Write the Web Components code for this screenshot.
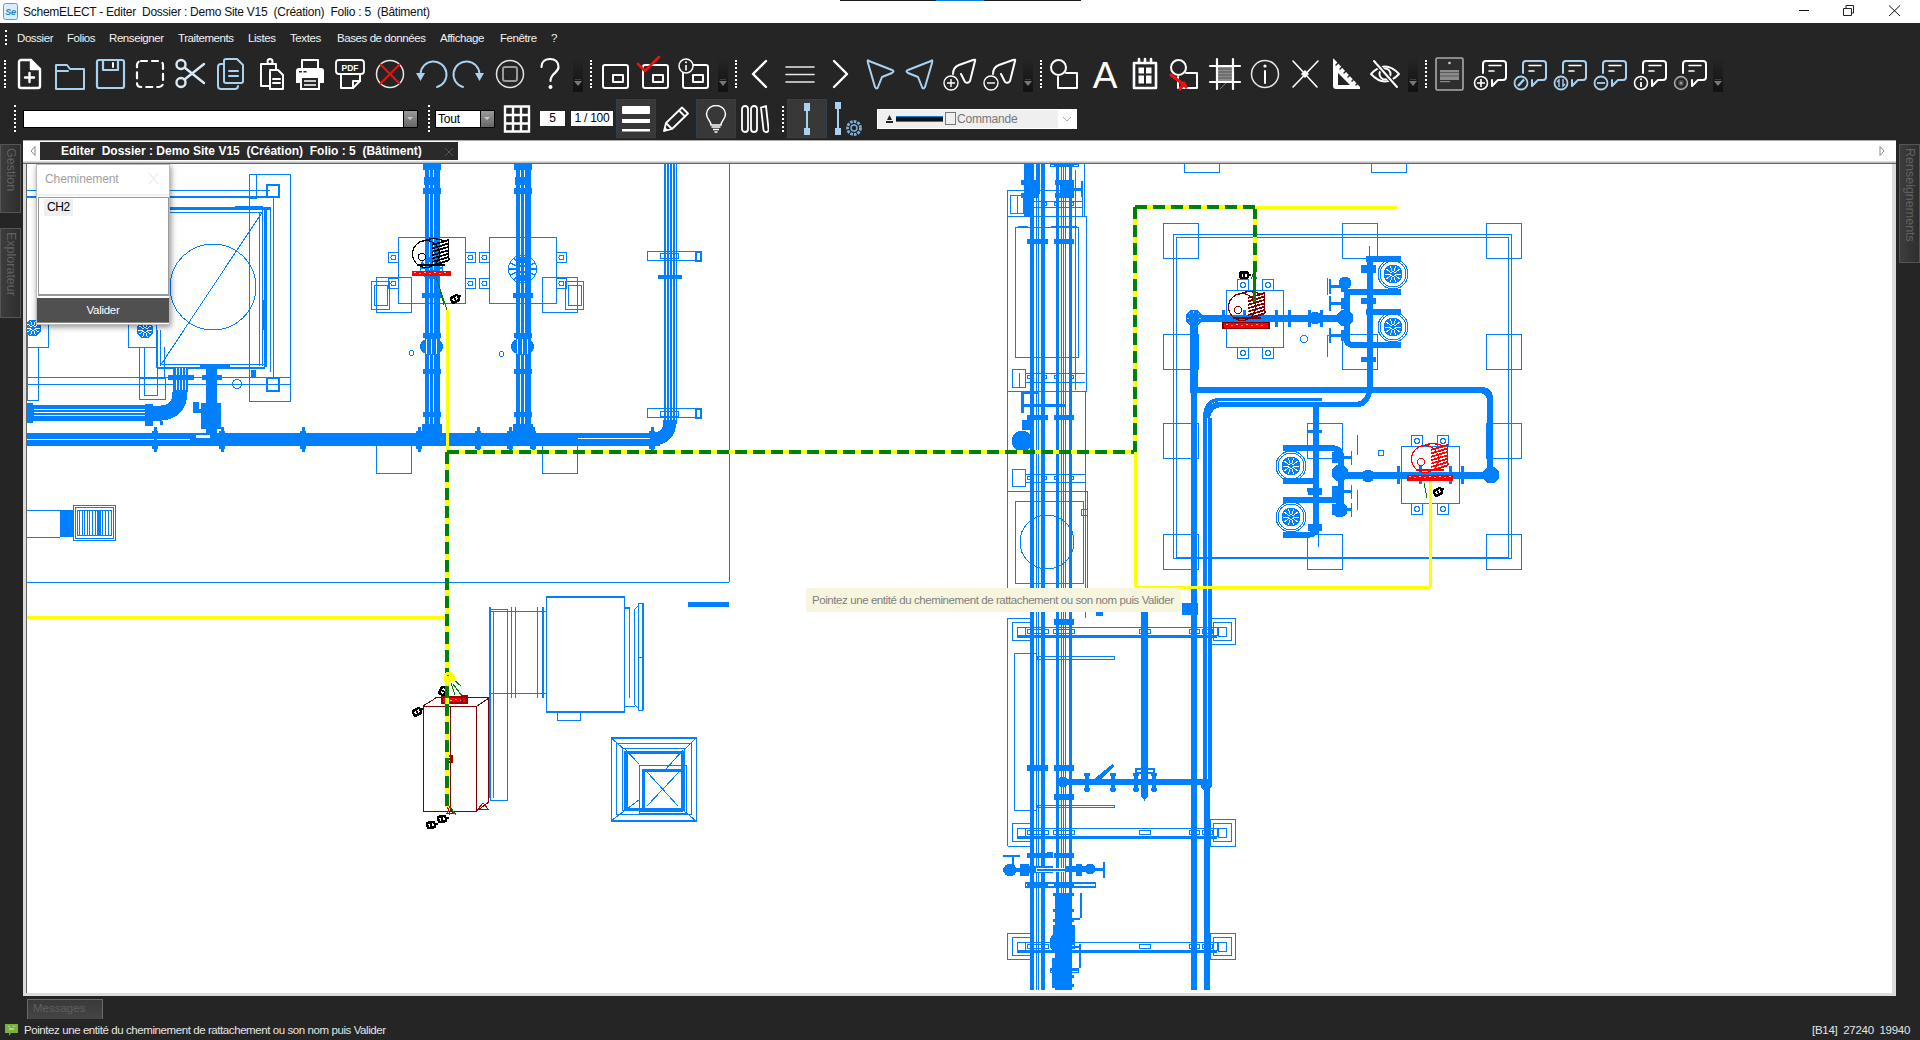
<!DOCTYPE html>
<html lang="fr"><head><meta charset="utf-8"><title>SchemELECT</title>
<style>html,body{margin:0;height:100%;background:#252525;overflow:hidden}</style></head>
<body>
<sc-app>
  <sc-titlebar>SchemELECT - Editer&nbsp; Dossier : Demo Site V15&nbsp; (Création)&nbsp; Folio : 5&nbsp; (Bâtiment)</sc-titlebar>
  <sc-menubar>
    <sc-menu w="50">Dossier</sc-menu><sc-menu w="42">Folios</sc-menu><sc-menu w="69">Renseigner</sc-menu><sc-menu w="70">Traitements</sc-menu><sc-menu w="42">Listes</sc-menu><sc-menu w="47">Textes</sc-menu><sc-menu w="103">Bases de données</sc-menu><sc-menu w="60">Affichage</sc-menu><sc-menu w="51">Fenêtre</sc-menu><sc-menu w="10">?</sc-menu>
  </sc-menubar>
  <sc-toolbar>
    <sc-group first more>
      <sc-btn icon="new"></sc-btn><sc-btn icon="folder"></sc-btn><sc-btn icon="save"></sc-btn><sc-btn icon="select"></sc-btn><sc-btn icon="cut"></sc-btn><sc-btn icon="copy"></sc-btn><sc-btn icon="paste"></sc-btn><sc-btn icon="print"></sc-btn><sc-btn icon="pdf"></sc-btn><sc-btn icon="cancel"></sc-btn><sc-btn icon="undo"></sc-btn><sc-btn icon="redo"></sc-btn><sc-btn icon="stop"></sc-btn><sc-btn icon="help"></sc-btn>
    </sc-group>
    <sc-group more><sc-btn icon="win"></sc-btn><sc-btn icon="wincheck"></sc-btn><sc-btn icon="wininfo"></sc-btn></sc-group>
    <sc-group more>
      <sc-btn icon="prev"></sc-btn><sc-btn icon="lines"></sc-btn><sc-btn icon="next"></sc-btn><sc-btn icon="arrowl"></sc-btn><sc-btn icon="arrowr"></sc-btn><sc-btn icon="arrowplus"></sc-btn><sc-btn icon="arrowminus"></sc-btn>
    </sc-group>
    <sc-group more>
      <sc-btn icon="shapes"></sc-btn><sc-btn icon="letter"></sc-btn><sc-btn icon="cal"></sc-btn><sc-btn icon="shapesfix"></sc-btn><sc-btn icon="hash"></sc-btn><sc-btn icon="info"></sc-btn><sc-btn icon="cross"></sc-btn><sc-btn icon="square"></sc-btn><sc-btn icon="eye"></sc-btn>
    </sc-group>
    <sc-group more>
      <sc-btn icon="note"></sc-btn><sc-btn icon="cplus"></sc-btn><sc-btn icon="cpen"></sc-btn><sc-btn icon="cswap"></sc-btn><sc-btn icon="cminus"></sc-btn><sc-btn icon="cinfo"></sc-btn><sc-btn icon="ctarget"></sc-btn>
    </sc-group>
  </sc-toolbar>
  <sc-toolbar2></sc-toolbar2>
  <sc-workspace>
    <sc-dock slot="left"><sc-vtab h="69">Gestion</sc-vtab><sc-vtab h="90" gap="15">Explorateur</sc-vtab></sc-dock>
    <sc-doc title-text="Editer&nbsp; Dossier : Demo Site V15&nbsp; (Création)&nbsp; Folio : 5&nbsp; (Bâtiment)">
      <sc-canvas>
        <sc-popup></sc-popup>
        <sc-tip>Pointez une entité du cheminement de rattachement ou son nom puis Valider</sc-tip>
      </sc-canvas>
    </sc-doc>
    <sc-dock slot="right" right><sc-vtab h="119">Renseignements</sc-vtab></sc-dock>
  </sc-workspace>
  <sc-messages>Messages</sc-messages>
  <sc-status coords="[B14]&nbsp; 27240&nbsp; 19940">Pointez une entité du cheminement de rattachement ou son nom puis Valider</sc-status>
</sc-app>
<script>
const FONT='"Liberation Sans",Arial,sans-serif';
const TXT=`font:11.5px ${FONT};letter-spacing:-.42px`;
function def(name,html){
  customElements.define(name,class extends HTMLElement{
    constructor(){super();this.attachShadow({mode:'open'});if(typeof html!=='function')this.shadowRoot.innerHTML=html;}
    connectedCallback(){if(typeof html==='function')this.shadowRoot.innerHTML=html(this);}
  });
}
const BL='#a9d1f0';
const g=(c,w,inner,ex='')=>`<g fill="none" stroke="${c}" stroke-width="${w}" stroke-linecap="round" stroke-linejoin="round" ${ex}>${inner}</g>`;
const winBox=`<rect x="6" y="9" width="25" height="23" rx="2"/><rect x="16" y="19" width="10" height="7"/>`;
const shapes=`<circle cx="11.5" cy="11.5" r="7.5"/><path d="M19 17H30V32H11V21"/>`;
const bubble=c=>g(c,2,`<path d="M14 5H31a3 3 0 0 1 3 3V21a3 3 0 0 1-3 3H26L20 30V24"/><path d="M14 5a3 3 0 0 0-3 3V17"/>`)+g('#fff',1.6,`<path d="M17 9.5H29M17 15H22"/>`);
const ICONS={
 new:g('#fff',2.4,`<path d="M9 4H19L28 13V30a2 2 0 0 1-2 2H9a2 2 0 0 1-2-2V6a2 2 0 0 1 2-2Z"/><path d="M19 4V13H28" fill="#fff"/><path d="M17.5 17V26M13 21.5H22"/>`),
 folder:g(BL,2,`<path d="M4 33V9H15L18 13H32V33Z"/><path d="M4 15H16"/>`),
 save:g(BL,2.2,`<path d="M7 4H30a2 2 0 0 1 2 2V30a2 2 0 0 1-2 2H7a2 2 0 0 1-2-2V6a2 2 0 0 1 2-2Z"/><path d="M11 4V14H26V4"/>`)+g('#fff',2,`<path d="M21 7V11"/>`),
 select:g('#fff',2.2,`<rect x="5" y="5" width="26" height="26" rx="4" stroke-dasharray="6 5"/>`),
 cut:g('#d8e9f8',2.4,`<circle cx="9" cy="8.5" r="4.5"/><circle cx="9" cy="26.5" r="4.5"/><path d="M12.5 11.5L32 27M12.5 23.5L32 8"/>`),
 copy:g(BL,2,`<path d="M14 3H25L31 9V25a2 2 0 0 1-2 2H14a2 2 0 0 1-2-2V5a2 2 0 0 1 2-2Z"/><path d="M12 8H9a3 3 0 0 0-3 3V30a3 3 0 0 0 3 3H23a3 3 0 0 0 3-3"/><path d="M17 15H26M17 20H26"/>`),
 paste:g('#fff',2,`<path d="M13 8H9V30H17"/><path d="M13 8H24V13"/><circle cx="18" cy="5.5" r="2.5"/><path d="M18 14H26L31 19V33H18Z"/><path d="M21 23H28M21 27H28"/>`),
 print:g('#fff',2,`<path d="M10 12V4H26V12"/>`)+`<path d="M7 12H29a3 3 0 0 1 3 3V27H4V15a3 3 0 0 1 3-3Z" fill="#fff"/><rect x="9" y="21" width="18" height="12" fill="#252525" stroke="#fff" stroke-width="2"/><path d="M12 25H24M12 29H24" stroke="#fff" stroke-width="1.6"/><rect x="7" y="15" width="3" height="1.5" fill="#252525"/><rect x="11.5" y="15" width="3" height="1.5" fill="#252525"/>`,
 pdf:g('#fff',2,`<path d="M9 17V32H21L28 25V17"/><path d="M21 32V25H28"/>`)+`<rect x="4" y="4" width="28" height="14" rx="3" fill="#252525" stroke="#fff" stroke-width="1.8"/><text x="18" y="14.5" font-family="${FONT}" font-size="8.5" font-weight="700" fill="#fff" text-anchor="middle">PDF</text>`,
 cancel:g('#e8e8e8',1.5,`<circle cx="18" cy="18" r="13.5"/>`)+g('#ee1111',2,`<path d="M8.5 8.5L27.5 27.5M27.5 8.5L8.5 27.5"/>`),
 undo:g(BL,2,`<path d="M25 31A13 13 0 1 0 8.5 18"/>`)+`<path d="M4 17H13L8.5 25Z" fill="${BL}"/>`,
 redo:`<g transform="translate(36,0) scale(-1,1)">`+g(BL,2,`<path d="M25 31A13 13 0 1 0 8.5 18"/>`)+`<path d="M4 17H13L8.5 25Z" fill="${BL}"/></g>`,
 stop:g('#e4e4e4',1.5,`<circle cx="18" cy="18" r="13.5"/>`)+g('#9a9a9a',2,`<rect x="11" y="11" width="14" height="14" rx="2"/>`),
 help:g('#fff',2.2,`<path d="M9.5 11C9.5 6 13 3 18 3S26.5 6 26.5 11C26.5 17 18.5 17 18.5 25"/>`)+`<circle cx="18.5" cy="31" r="2" fill="#fff"/>`,
 win:g('#fff',2,winBox),
 wincheck:g('#fff',2,winBox)+g('#ee1111',2.6,`<path d="M1 8L8 15L22 1"/>`),
 wininfo:g('#fff',2,winBox)+`<circle cx="9" cy="10" r="7" fill="#252525" stroke="#fff" stroke-width="1.5"/><path d="M9 9V14.5" stroke="#fff" stroke-width="1.6"/><circle cx="9" cy="6.3" r="1" fill="#fff"/>`,
 prev:g('#fff',2.4,`<path d="M24 5L11 18L24 31"/>`),
 next:g('#fff',2.4,`<path d="M12 5L25 18L12 31"/>`),
 lines:g('#e8e8e8',1.6,`<path d="M4 11H32M4 18.5H32M4 26H32"/>`),
 arrowl:g(BL,2,`<path d="M7 5Q5 3 6 7L13 31Q15 34 16 31L20 21L30 17Q33 15 30 14Z"/>`),
 arrowr:g(BL,2,`<path d="M29 5Q31 3 30 7L23 31Q21 34 20 31L16 21L6 17Q3 15 6 14Z"/>`),
 arrowplus:g('#fff',2,`<path d="M33 5Q34 3 31 4L17 9C12 11 11 14 11 18M33 5L28 25Q26 28 23 26L19 18"/>`)+`<circle cx="9" cy="27" r="7" fill="#252525" stroke="#fff" stroke-width="1.4"/><path d="M5 27H13M9 23V31" stroke="#fff" stroke-width="1.4"/>`,
 arrowminus:g('#fff',2,`<path d="M33 5Q34 3 31 4L17 9C12 11 11 14 11 18M33 5L28 25Q26 28 23 26L19 18"/>`)+`<circle cx="9" cy="27" r="7" fill="#252525" stroke="#fff" stroke-width="1.4"/><path d="M5 27H13" stroke="#fff" stroke-width="1.4"/>`,
 shapes:g('#fff',2,shapes),
 letter:`<text x="18" y="32" font-family="${FONT}" font-size="37" fill="#fff" text-anchor="middle">A</text>`,
 cal:g('#fff',2.6,`<rect x="7" y="7" width="22" height="25"/><path d="M12 3V7M18 3V7M24 3V7"/>`,'stroke-linecap="butt"')+`<rect x="11.5" y="11.5" width="5.5" height="6" fill="#fff"/><rect x="19" y="11.5" width="5.5" height="6" fill="#fff"/><rect x="11.5" y="19.5" width="5.5" height="8" fill="#fff"/><rect x="19" y="19.5" width="5.5" height="8" fill="#fff"/>`,
 shapesfix:g('#fff',2,shapes)+g('#ee1111',3.2,`<path d="M4 19L16 28M13 33L17 27L19 31"/>`),
 hash:`<rect x="10" y="10" width="16" height="16" fill="#8a8a8a"/><path d="M10 13H26M10 16H26M10 19H26M10 22H26" stroke="#555" stroke-width="1"/><path d="M19 27L13 33" stroke="#777"/>`+g('#fff',2.2,`<path d="M10 3V33M26 3V33M3 10H33M3 26H33"/>`,'stroke-linecap="butt"'),
 info:g('#e8e8e8',1.5,`<circle cx="18" cy="18" r="13.5"/>`)+g('#fff',2,`<path d="M18 15V27"/>`)+`<circle cx="18" cy="10" r="1.6" fill="#fff"/>`,
 cross:g('#fff',1.6,`<path d="M6 5L30 31M31 5L6 31"/>`)+`<path d="M18 14L22 18L18 22L14 18Z" fill="#fff"/>`,
 square:`<path d="M6 3Q6 2 7 3L33 31V33H9Q6 33 6 30Z" fill="#fff"/><path d="M11 17L23 29H11Z" fill="#252525"/>`+g('#252525',1.5,`<path d="M11 7L9 9M15 11L13 13M19 15L17 17M23 19L21 21M27 23L25 25M31 27L29 29"/>`),
 eye:g('#fff',2,`<path d="M4 18Q18 3 32 18Q18 33 4 18Z"/><circle cx="18" cy="18" r="5.5"/>`)+g('#252525',4.5,`<path d="M7 5L30 31"/>`)+g('#fff',2,`<path d="M7 5L30 31"/>`),
 note:`<rect x="4" y="4" width="27" height="32" rx="1.5" transform="translate(0,-2)" fill="#2e2e2e" stroke="#aaa" stroke-width="1.6"/>`+`<circle cx="17.5" cy="7" r="1.3" fill="#ccc"/><rect x="8" y="14" width="19" height="10" fill="#8c8c8c"/><path d="M8 16.5H27M8 20H27" stroke="#5a5a5a" stroke-width="1"/><rect x="8" y="25" width="10" height="1.2" fill="#8c8c8c"/>`,
 cplus:bubble('#fff')+`<circle cx="9" cy="27" r="6.5" fill="#252525" stroke="#fff" stroke-width="1.6"/><path d="M5 27H13M9 23V31" stroke="#fff" stroke-width="1.6"/>`,
 cpen:bubble(BL)+`<circle cx="9" cy="27" r="6.5" fill="#252525" stroke="${BL}" stroke-width="1.8"/><path d="M6 30L12 23.5" stroke="${BL}" stroke-width="2.4"/>`,
 cswap:bubble(BL)+`<circle cx="9" cy="27" r="6.5" fill="#252525" stroke="${BL}" stroke-width="1.8"/><path d="M7 31V24L5 26M11 23V30L13 28" stroke="${BL}" stroke-width="1.4" fill="none"/>`,
 cminus:bubble(BL)+`<circle cx="9" cy="27" r="6.5" fill="#252525" stroke="${BL}" stroke-width="1.8"/><path d="M5 27H13" stroke="${BL}" stroke-width="1.8"/>`,
 cinfo:bubble('#fff')+`<circle cx="9" cy="27" r="6.5" fill="#252525" stroke="#fff" stroke-width="1.6"/><path d="M9 26V31" stroke="#fff" stroke-width="1.8"/><circle cx="9" cy="23.3" r="1" fill="#fff"/>`,
 ctarget:bubble('#fff')+`<circle cx="9" cy="27" r="6.5" fill="#444" stroke="#aaa" stroke-width="1.4"/><circle cx="9" cy="27" r="4" fill="none" stroke="#111" stroke-width="1.2"/><circle cx="9" cy="27" r="1.5" fill="#999"/>`
};
def('sc-app',`<style>:host{display:flex;flex-direction:column;height:1040px;width:1920px;background:#252525;color:#fff;font:12px ${FONT}}</style><slot></slot>`);
def('sc-titlebar',`<style>
:host{display:flex;align-items:center;height:23px;flex:none;background:#fff;color:#111;font:12px ${FONT};letter-spacing:-.26px;position:relative}
.logo{width:15px;height:17px;margin:0 5px 0 3px;flex:none}
.txt{flex:1;white-space:nowrap}
.ctl{display:flex;height:100%;width:143px;flex:none}
.ctl svg{width:45px;height:23px;display:block;flex:none}
.progress{position:absolute;left:840px;top:0;width:241px;height:1px;background:#1c1c1c}
.progress i{position:absolute;left:96px;width:48px;height:1px;background:#0a7fd8}
</style>
<svg class="logo" viewBox="0 0 15 17"><rect x=".5" y=".5" width="14" height="16" rx="2" fill="#d9efff" stroke="#4aa3df"/><text x="7.5" y="12" font-family="${FONT}" font-size="9" font-weight="700" font-style="italic" fill="#1a83c9" text-anchor="middle">Se</text></svg>
<span class="txt"><slot></slot></span>
<div class="progress"><i></i></div>
<div class="ctl">
<svg viewBox="0 0 45 23"><path d="M22 10.5H32" stroke="#111"/></svg>
<svg viewBox="0 0 45 23" style="margin-left:2px"><path d="M19.5 8.5H27.5V15.5H19.5ZM22 8.5V5.5H29.5V13H27.5" fill="none" stroke="#222"/></svg>
<svg viewBox="0 0 37 23" style="width:37px;margin-left:9px"><path d="M11 5.5L22 16M22 5.5L11 16" stroke="#111" fill="none"/></svg>
</div>`);
def('sc-menubar',`<style>
:host{display:flex;align-items:center;height:27px;flex:none;background:#252525;padding:2px 0 0 17px;position:relative;box-sizing:border-box}
i{position:absolute;left:5px;top:7px;width:0;height:15px;border-left:2px dotted #fff}
</style><i></i><slot></slot>`);
def('sc-menu',el=>`<style>:host{display:block;flex:none;width:${el.getAttribute('w')}px;color:#f2f2f2;${TXT};white-space:nowrap}</style><slot></slot>`);
def('sc-toolbar',`<style>:host{display:flex;height:47px;flex:none;align-items:center}</style><slot></slot>`);
def('sc-group',el=>`<style>:host{display:flex;align-items:center;height:47px;flex:none}
.grip{width:${el.hasAttribute('first')?10:9}px;height:28px;display:flex;justify-content:center}
.grip i{border-left:2px dotted #fff;height:28px;width:0;display:block}
.more{width:16px;height:34px;display:flex;justify-content:center;align-self:center;margin-top:3px}
.more b{display:block;width:10px;height:34px;background:linear-gradient(#252525,#111);position:relative}
.more svg{position:absolute;left:1px;bottom:6px}
</style><div class="grip"><i></i></div><slot></slot><div class="more"><b><svg width="8" height="7" viewBox="0 0 8 7"><path d="M1 0H7" stroke="#666"/><path d="M0 2H8L4 7Z" fill="#777"/></svg></b></div>`);
def('sc-btn',el=>`<style>:host{display:block;width:40px;height:36px;flex:none}svg{display:block;width:36px;height:36px;margin:0 2px;overflow:visible}</style><svg viewBox="0 0 36 36">${ICONS[el.getAttribute('icon')]||''}</svg>`);
def('sc-toolbar2',`<style>
:host{display:flex;height:43px;flex:none;align-items:center;position:relative;padding-left:14px;box-sizing:border-box}
.grip{border-left:2px dotted #fff;height:27px;width:0;flex:none}
.ddl{display:flex;height:16px;border:1px solid #000;background:#fff;flex:none;box-sizing:content-box}
.ddl b{width:13px;background:linear-gradient(#9a9a9a,#666);display:block;position:relative;border-left:1px solid #000}
.ddl b::after{content:"";position:absolute;left:3px;top:6px;border:3.5px solid transparent;border-top-color:#ccc}
.ddl span{color:#000;font:12px ${FONT};letter-spacing:-.2px;line-height:16px;padding-left:2px}
.box{background:#fff;color:#000;font:12px ${FONT};letter-spacing:-.25px;height:15px;line-height:15px;text-align:center;flex:none}
.hl{width:38px;height:37px;background:#383838;border:1px solid #2d4050;display:flex;align-items:center;justify-content:center;flex:none;box-sizing:content-box}
svg{display:block;flex:none}
.combo{width:200px;height:20px;background:#efefef;border:1.5px solid #fff;box-sizing:border-box;display:flex;align-items:center;flex:none;position:relative;font:12px ${FONT};letter-spacing:-.2px;color:#777}
.combo .ln{width:47px;height:4px;background:#111;border-top:1px solid #0a7fd8;border-bottom:1px solid #0a7fd8;margin-left:3px}
.combo .sq{width:11px;height:13px;border:1px solid #777;margin-left:2px;box-sizing:border-box}
.combo em{font-style:normal;margin-left:1px;flex:1}
.combo .ch{position:absolute;right:0;top:0;bottom:0;width:18px;background:#fff;display:flex;align-items:center;justify-content:center}
</style>
<div class="grip"></div>
<div class="ddl" style="margin-left:7px;width:393px"><span style="flex:1"></span><b></b></div>
<div class="grip" style="margin-left:10px"></div>
<div class="ddl" style="margin-left:5px;width:58px"><span style="flex:1">Tout</span><b></b></div>
<svg style="margin-left:8px" width="28" height="28" viewBox="0 0 28 28"><path d="M2 1.5H26V26.5H2ZM2 10H26M2 18.5H26M10 1.5V26.5M18 1.5V26.5" fill="none" stroke="#fff" stroke-width="2.4"/></svg>
<div class="box" style="margin-left:9px;width:25px">5</div>
<div class="box" style="margin-left:6px;width:42px">1 / 100</div>
<div class="hl" style="margin-left:3px"><svg width="28" height="26" viewBox="0 0 28 26"><rect width="28" height="8" y="0" rx="1" fill="#fff"/><rect width="28" height="4" y="13" fill="#fff"/><rect width="28" height="2.5" y="23" fill="#fff"/></svg></div>
<svg style="margin-left:6px" width="28" height="28" viewBox="0 0 28 28"><path d="M2 26L4 18L20 2.5L26 8.5L10 24Z M17 5.5L23 11.5 M4 18L10 24" fill="none" stroke="#fff" stroke-width="1.8" stroke-linejoin="round"/><path d="M2 26.5L3 22L6.5 25.5Z" fill="#fff"/></svg>
<div class="hl" style="margin-left:6px"><svg width="22" height="28" viewBox="0 0 22 28"><path d="M6 20C6 16 1.5 14 1.5 9A9.5 8.5 0 0 1 20.5 9C20.5 14 16 16 16 20Z" fill="none" stroke="#fff" stroke-width="1.5"/><path d="M6.5 22H15.5M8 24.5H14M9.5 27H12.5" stroke="#fff" stroke-width="1.4"/></svg></div>
<svg style="margin-left:5px" width="28" height="28" viewBox="0 0 28 28"><g fill="none" stroke="#fff" stroke-width="1.8"><rect x="1" y="1" width="6" height="26" rx="3"/><rect x="10" y="1" width="6" height="26" rx="3"/><path d="M20 2.5L25 1.2L27.6 25Q27 27.5 24.5 27Q23 26.6 22.5 25Z"/></g></svg>
<div class="grip" style="margin-left:13px;height:26px"></div>
<div class="hl" style="margin-left:3px"><svg width="8" height="32" viewBox="0 0 8 32"><rect width="6" height="8" x="1" y="0" fill="${BL}"/><rect width="2" height="18" x="3" y="7" fill="${BL}"/><rect width="6" height="7" x="1" y="25" fill="${BL}"/></svg></div>
<svg style="margin-left:8px" width="28" height="36" viewBox="0 0 28 36"><rect width="6" height="7" x="0" y="1" fill="${BL}"/><rect width="2" height="20" x="2" y="7" fill="${BL}"/><rect width="6" height="7" x="0" y="27" fill="${BL}"/><g fill="none" stroke="#7fb0d8" stroke-width="1.4"><circle cx="19" cy="27" r="3"/><circle cx="19" cy="27" r="6.5" stroke-dasharray="2.6 1.1" stroke-width="2.8"/></g></svg>
<div class="combo" style="margin-left:14px"><svg style="margin-left:8px" width="7" height="8" viewBox="0 0 7 8"><path d="M3.5 0L6 5H1Z" fill="#222"/><rect y="6" width="7" height="2" fill="#222"/></svg><span class="ln"></span><span class="sq"></span><em>Commande</em><span class="ch"><svg width="10" height="6" viewBox="0 0 10 6"><path d="M1 1L5 5L9 1" fill="none" stroke="#aaa"/></svg></span></div>`);
def('sc-workspace',`<style>:host{display:flex;height:856px;flex:none}</style><slot name="left"></slot><slot></slot><slot name="right"></slot>`);
def('sc-dock',el=>`<style>:host{display:flex;flex-direction:column;width:${el.hasAttribute('right')?24:23}px;flex:none;padding-top:4px;box-sizing:border-box;align-items:${el.hasAttribute('right')?'flex-end':'flex-start'}}</style><slot></slot>`);
def('sc-vtab',el=>`<style>:host{display:flex;flex:none;width:21px;height:${el.getAttribute('h')}px;margin-top:${el.getAttribute('gap')||0}px;box-sizing:border-box;background:linear-gradient(90deg,#3d3d3d,#2e2e2e);border:1px solid #555;justify-content:center;color:#616161;font:12.5px ${FONT}}
span{writing-mode:vertical-rl;padding-top:3px;white-space:nowrap}</style><span><slot></slot></span>`);
def('sc-doc',el=>`<style>
:host{display:flex;flex-direction:column;flex:1;min-width:0;background:#dcdcdc;position:relative}
.strip{height:21px;background:#fff;border-top:1px solid #aaa;box-sizing:border-box;display:flex;align-items:flex-end;position:relative;flex:none}
.tab{margin-left:17px;width:418px;height:18px;background:#2a2a2a;color:#fff;font:700 12px ${FONT};display:flex;align-items:center;padding-left:21px;box-sizing:border-box;white-space:nowrap;position:relative;margin-bottom:1px}
.tab svg{position:absolute;right:4px;top:5px}
.a{position:absolute;left:7px;top:5px}
.b{position:absolute;right:11px;top:5px}
.sep{height:3px;flex:none;background:linear-gradient(#fff 0,#bbb 1px,#bbb 2px,#666 2px);}
.body{flex:1;display:flex;min-height:0;padding:0 4px 3px 3px;}
</style>
<div class="strip"><svg class="a" width="6" height="10" viewBox="0 0 6 10"><path d="M5 .5L1 5L5 9.5Z" fill="#fff" stroke="#888"/></svg><div class="tab">${el.getAttribute('title-text')}<svg width="10" height="10" viewBox="0 0 10 10"><path d="M1 1L9 9M9 1L1 9" stroke="#555" fill="none"/></svg></div><svg class="b" width="6" height="10" viewBox="0 0 6 10"><path d="M1 .5L5 5L1 9.5Z" fill="#fff" stroke="#888"/></svg></div>
<div class="sep"></div>
<div class="body"><slot></slot></div>`);
/* ---- drawing ---- */
const B='#0080ff';
function drawing(){
  const s=[];
  const L=(a,b,c,d,w=1,col=B)=>s.push(`<line x1="${a}" y1="${b}" x2="${c}" y2="${d}" stroke="${col}" stroke-width="${w}"/>`);
  const R=(x,y,w,h,sw=1,col=B)=>s.push(`<rect x="${x}" y="${y}" width="${w}" height="${h}" fill="none" stroke="${col}" stroke-width="${sw}"/>`);
  const F=(x,y,w,h,col=B)=>s.push(`<rect x="${x}" y="${y}" width="${w}" height="${h}" fill="${col}"/>`);
  const C=(x,y,r,sw=1,col=B,fill='none')=>s.push(`<circle cx="${x}" cy="${y}" r="${r}" fill="${fill}" stroke="${col}" stroke-width="${sw}"/>`);
  const P=(d,w=1,col=B)=>s.push(`<path d="${d}" fill="none" stroke="${col}" stroke-width="${w}"/>`);
  const spokes=(x,y,r,n=12,col='#fff',w=1,r0=2)=>{for(let i=0;i<n;i++){const a=i/n*6.283;L(x+Math.cos(a)*r0,y+Math.sin(a)*r0,x+Math.cos(a)*r,y+Math.sin(a)*r,w,col);}};
  const fan=(x,y,ro=15,ri=9)=>{C(x,y,ro);C(x,y,ro-2);C(x,y,ri,1,B,B);spokes(x,y,ri-1,10);};
  const blob=(x,y,col='#000',rot=-30)=>{s.push(`<g transform="translate(${x},${y}) rotate(${rot})"><rect x="-5" y="-4" width="10" height="8" rx="3" fill="${col}"/><rect x="-2.5" y="-1.5" width="1.6" height="3" fill="#fff"/><rect x="1" y="-1.5" width="1.6" height="3" fill="#fff"/><rect x="5" y="-1" width="2" height="2" fill="${col}"/></g>`);};
  const scribble=(x,y,col)=>{
    C(x-5,y+2,13.5,1.2,col);C(x-9,y+5,3.5,1.2,col);
    P(`M${x-9} ${y-10}Q${x+2} ${y-17} ${x+15} ${y-10}`,1.2,col);
    for(let k=0;k<7;k++){P(`M${x+1} ${y-7+k*3.4}L${x+18} ${y-12+k*3.4}`,1.8,col);}
    L(x+17,y-13,x+18,y+8,1.2,col);
    P(`M${x-14} ${y+13}H${x+14}`,2,col);
  };
  const redbar=(x,y,w,h=5,col='#ff0000')=>{F(x,y,w,h,col);for(let i=2;i<w-2;i+=5)F(x+i,y+1+(i%2),2,1,'#ffb0b0');};
  const motorFan=(x,y,r=11)=>{C(x,y,r,1);spokes(x,y,r,14,B,1.4,3);};
  /* room */
  L(729,164,729,582);L(27,582,729,582);
  /* left machine */
  L(27,190.5,270,190.5,1);L(27,197,270,197,2);
  R(249.5,174.5,41,227);R(249.5,174.5,7,24);L(256,175,256,197);L(249.5,378,249.5,401);
  R(267,185,12,12,2);R(267,378,12,13,2);
  L(157,207.5,270,207.5,2);L(170,212,262,212);L(160,209,270,209);F(235,206,28,3);
  L(259,212,259,366);L(262,209,262,366);F(264,210,3,157);L(270,207,270,372);L(273,197,273,378);F(264,290,2,40);F(263,300,3,30);
  L(157,330,157,368,2);L(160,330,160,366);L(160,364.5,265,364.5);L(157,367.5,265,367.5,2);F(200,365,30,2);
  F(251,370,5,8);
  C(213,287,43);L(160,366,263,211);
  L(27,377.5,291,377.5,1.5);L(27,384.5,291,384.5);
  R(27.5,347.5,11,53);R(139.5,378.5,26,21);R(144.5,347.5,13,48);L(139.5,347,139.5,378);L(164.5,347,164.5,378);
  R(27.5,323.5,21,24);R(128.5,323.5,28,24);
  fan(33,328,8,8);fan(145,330,8,8);
  C(237,384,4.5);
  /* left pipes */
  F(27,405,121,16);[409,412,415].forEach(y=>L(34,y,145,y,1,'#fff'));F(27,403,6,20);
  F(145,404,8,22);
  P('M150 413H162Q180 411 180 392V368',15);
  [176,179,182,185].forEach(x=>L(x,368,x,390,1,'#fff'));
  F(168,375,26,5);F(160,421,3,4);
  F(206,368,11,66);F(202,375,20,5);F(201,403,20,26);F(193,402,6,8);F(193,409,12,4);
  F(27,433,633,13);L(27,439,190,439,1,'#fff');L(578,438,650,438,1,'#fff');F(196,435,14,3,'#fff');
  [155,222,303,478,510,533,419,652].forEach(x=>{F(x-1.5,427,3,25);F(x-3,431,6,4);F(x-3,445,6,4);});
  /* pipes 1, 2 */
  [431.5,522.5].forEach(x=>{
    F(x-7,164,15,269);L(x-2,164,x-2,430,1,'#fff');L(x+2,164,x+2,430,1,'#fff');
    [[164,6,9],[177,8,8],[188,6,9],[293,5,10],[333,5,9],[369,5,9],[412,5,9],[424,9,10]].forEach(([y,h,w])=>F(x-w,y,w*2,h));
    s.push(`<ellipse cx="${x}" cy="346.5" rx="11.5" ry="9" fill="${B}"/>`);
    [-5,0,5].forEach(d=>L(x+d,339,x+d,354,1,'#fff'));
  });
  /* motor boxes */
  const box=(x,y,w,h)=>R(x+.5,y+.5,w,h);
  box(398,237,67,66);box(489,237,67,66);
  [[388,252],[388,278],[465,252],[465,278],[479,252],[479,278],[556,252],[556,278]].forEach(([x,y])=>{box(x,y,10,10);C(x+5.5,y+5.5,2.5,1);});
  box(376,277,35,35);box(371,281,18,28);box(374,285,13,20);
  box(542,277,35,35);box(565,281,18,28);box(568,285,13,20);
  box(376,440,35,33);box(542,440,35,33);
  motorFan(522.5,269,14);motorFan(431.5,268,11);
  C(411.5,353,2.5);C(501.5,354,2.5);
  /* pipe 3 */
  F(664,164,13,260);[666,669,672,675].forEach(x=>L(x,164,x,424,1,'#fff'));
  P('M670 420Q670 439 652 439',13);
  R(647.5,251.5,53,9);R(695.5,251.5,5,9,2);R(660.5,253.5,18,5);F(658,275,24,4);
  R(647.5,408.5,53,9);R(695.5,408.5,5,9,2);R(660.5,411.5,18,5);
  /* vent */
  L(27,510,60,510);L(27,537,60,537);F(60,510,13,27);R(73.5,505.5,42,35);R(75.5,507.5,38,31);
  R(77.5,510.5,34,25);for(let x=79;x<110;x+=2.6)L(Math.round(x),511,Math.round(x),535);L(98,511,98,535,3);
  /* cabinet */
  R(423.5,706.5,53,105,1.5,'#800000');
  L(435,697.5,489,697.5,1,'#800000');L(488.5,697,488.5,802,1,'#800000');
  L(423,706,436,698,1,'#800000');L(477,706,489,698,1,'#800000');L(477,811,489,802,1,'#800000');L(450,707,450,811,1,'#800000');
  /* wall blue left of big box */
  R(490.5,609.5,17,191);L(490,607,490,798,1.5);L(493.5,611,493.5,798);
  L(490,611.5,546,611.5);L(490,693.5,546,693.5);
  [511,515,537].forEach(x=>L(x,607,x,698));L(543,607,543,698,2);
  R(546.5,597,78,115,1.5);R(557.5,712.5,23,8);
  L(625,608,630,608,2);L(625,706,635,706,1);L(629,607,629,698);L(634,610,634,704);L(643.5,603,643.5,710);
  R(638.5,603.5,4,107);L(634,610,638,606);L(634,704,638,708);L(638,657.5,643,657.5);
  F(688,602,41,5);
  /* square duct */
  R(611.5,738,85,83,1.5);R(616.5,743.5,75,71);R(622,748.5,62,62);R(625,752,58,57,3);R(626.5,753,55,57,2);
  R(639,765.5,47,48);R(643,770,40,39,3);L(683,770,683,810,4);L(639,810,683,810,3);
  L(611,738,624,749);L(696,738,685,749);L(611,821,639,800);L(696,821,684,811);
  L(624,748,639,764);L(683,750,665,770);L(647,772,678,806);L(679,772,647,806);
  /* cabinet accessories */
  blob(417,712);blob(443,691,'#000',-60);blob(431,825,'#000',-10);blob(442,819,'#000',-10);
  s.push(`<g stroke="#008000" stroke-width="1" fill="none"><path d="M449 682L446 704M451 683L455 695M453 684L462 696M454 680L461 686M447 806L450 815M450 807L456 815"/></g>`);
  F(441,696,27,8,'#a00000');redbar(443,698,22,4);R(462,696,5,7,1.5,'#a00000');
  F(447,755,6,8,'#a00000');F(449,757,1,1,'#fff');F(449,760,1,1,'#fff');
  P('M478 809L483 803L488 809Z',1,'#c00000');P('M447 813L450 806L453 813Z',1,'#c00000');
  /* Right plant outer */
  R(1173.5,234.5,338,324);R(1176.5,237.5,332,320);
  [[1163,223],[1342,223],[1486,223],[1163,334],[1342,334],[1486,334],[1163,423],[1307,423],[1486,423],[1163,534],[1307,534],[1486,534]].forEach(([x,y])=>R(x+.5,y+.5,35,35));
  R(1184.5,160,35,12);R(1371.5,160,35,12);
  /* top pump group */
  box(1226,290,57,57);
  [[1237,279],[1262,279],[1237,347],[1262,347]].forEach(([x,y])=>{box(x,y,11,11);C(x+6,y+6,2.5,1.2);});
  F(1193,315,147,7);C(1194,318,8,1,B,B);spokes(1194,318,7,8,'#fff',.6,5);
  [1222,1243,1275,1288,1308,1320].forEach(x=>F(x,310,3,17));
  C(1315,318,6,1,B,B);C(1345,318,7,1,B,B);
  F(1190,323,8,70);
  P('M1190 390H1480Q1490 390 1490 400V470',6.5);
  F(1367,260,6,125);F(1369,246,1,14);
  P('M1370 383Q1370 404.5 1356 404.5H1220Q1210 404.5 1207 418',5.5);
  P('M1322 399.5H1220Q1205 400 1204.5 418',3.5);
  F(1191,393,6,219);F(1203,418,3.5,194);F(1208,418,4,194);
  F(1366,256,35,6);F(1344,289,57,6);F(1366,309,35,6);P('M1347 295V340Q1347 345 1354 345H1401',6);
  F(1361,265,15,8);F(1361,298,15,6);F(1361,357,15,5);F(1344,283,3,25);
  fan(1393,274);fan(1393,327);
  C(1345,283,6,1,B,B);C(1345,318,8,1,B,B);
  [[1329,285],[1329,302],[1329,334]].forEach(([x,y])=>{F(x,y,20,3);F(x,y-6,2,15);F(x+12,y-4,6,11);});
  L(1327,278,1327,295);L(1327,335,1327,357);L(1327,335,1330,335);
  C(1304,339,3.5);
  /* bottom pump group */
  box(1401,446,58,57);
  [[1411,435],[1437,435],[1411,503],[1437,503]].forEach(([x,y])=>{box(x,y,11,11);C(x+6,y+6,2.5,1.2);});
  F(1340,472,150,7);C(1491,475,8,1,B,B);
  [1397,1419,1449,1461].forEach(x=>F(x,466,3,18));
  C(1368,476,6,1,B,B);
  fan(1291,466);fan(1291,517);
  F(1313,407,6,127);F(1283,445,48,6);P('M1330 448Q1341 448 1341 456V510',6);F(1283,478,33,6);F(1283,497,60,6);P('M1283 534.5H1310Q1316 534 1316 525',6);
  F(1307,430,15,3);
  F(1307,488,15,4);F(1308,491,14,4);F(1308,524,14,7);
  C(1340,473,8,1,B,B);C(1340,510,7,1,B,B);
  [[1332,456],[1332,490],[1332,508]].forEach(([x,y])=>{F(x,y,20,3);F(x+19,y-5,1,14);F(x,y-4,10,11);});
  L(1357,435,1357,455);L(1357,490,1357,510);L(1318,520,1318,547);
  C(1381,453,3);
  /* towers */
  F(1030,164,4,826);F(1041,164,4,826);[1036.5,1038.5].forEach(x=>L(x,164,x,990));
  F(1056,164,3,826);F(1069,164,3,826);[1061.5,1063.5,1065.5].forEach(x=>L(x,164,x,990));
  F(1024,164,6,52);F(1037,164,3,30);F(1021,180,18,5);F(1021,193,18,5);F(1055,180,19,5);F(1055,193,19,5);F(1060,185,14,8);F(1026,185,14,8);
  F(1074,188,8,2);F(1081,181,2,16);R(1050.5,164,28,2.5);F(1054,164,20,3);
  R(1007.5,190.5,75,26);R(1010.5,195.5,13,18,1.5);L(1017,196,1017,213);L(1024,201,1083,201);L(1024,207,1083,207);
  [1027,1043,1054,1070].forEach(x=>R(x+.5,202.5,3,3));
  L(1075,170,1075,390);L(1084,164,1084,216);
  R(1007.5,216.5,79,175);R(1015.5,227.5,63,130,1.5);
  F(1018,226,10,2);F(1051,226,26,2);
  F(1027,239,21,5);F(1054,239,20,5);
  R(1012.5,369.5,13,18);L(1025,373,1085,373);L(1025,382,1085,382);L(1019,373,1019,387);L(1025,379,1025,385);
  [1027,1043,1054,1070].forEach(x=>R(x+.5,375.5,3,3));
  F(1021,391,3,22);F(1021,392,18,2);F(1021,404,45,3);
  F(1027,415,21,5);F(1054,415,20,5);F(1022,420,8,10);
  C(1022,441,10,1,B,B);L(1007,392,1007,588);L(1085,392,1085,588);
  R(1012.5,469.5,13,17);L(1025,474,1085,474);L(1025,482,1085,482);
  [1027,1043,1054,1070].forEach(x=>R(x+.5,476,3,3));
  R(1007.5,491.5,80,108);R(1015.5,501.5,68,82);C(1047,542,27);R(1081,509,6,6);
  L(1070,500,1070,600);
  /* lower rows */
  const rail=(y,top,bot)=>{
    R(1017.5,y,200,8.5);F(1017,y+9,200,1.6);
    [[1027,21],[1053,21],[1139,11],[1189,10],[1202,10]].forEach(([x,w])=>{R(x+.5,y+2.5,w,4);});
    R(1012.5,y-5,18,18);R(1017.5,y,8,9);R(1213.5,y-5,18,18);R(1218.5,y,8,9);
    R(1210.5,top,25,bot-top);
  };
  L(1007.5,618,1007.5,846);L(1007.5,618,1032,618);L(1007.5,846,1032,846);
  rail(627,618,644);rail(828,819,846);
  R(1007.5,933,26,26);rail(942,933,959);
  R(1014.5,653,22,157);R(1037,656,77,3);R(1037,805,77,2);
  F(1141,612,7,185);s.push(`<path d="M1141 795H1148L1144.5 801Z" fill="${B}"/>`);
  F(1191,612,6,378);F(1204,787,6,203);F(1203,612,3.5,175);F(1208,612,4,175);
  F(1182,603,16,12);
  F(1096,612,7,4);L(1085,612,1085,618);
  F(1054,619,20,6);F(1027,765,21,6);F(1054,765,20,6);F(1054,794,20,6);F(1027,853,21,5);F(1054,853,20,5);
  /* side branch */
  F(1057,779,153,6);C(1063,782,5,1,B,B);
  [1087,1113,1136,1154].forEach(x=>{F(x-2,773,4,19);F(x-3,788,6,3);F(x-3,773,6,3);});
  s.push(`<path d="M1094 779L1110 766L1113 763L1114 766L1110 771L1100 780Z" fill="${B}"/>`);
  F(1141,770,7,25);R(1136,769,18,4,1.5);C(1206,785,5,1,B,B);
  /* lower valve */
  F(1023,866,30,2);F(1023,871,30,2);F(1003,868,80,4,B);R(1036,868,60,3,1,'#fff');
  C(1010,870,6,1,B,B);F(1020,864,9,12);F(1076,864,6,12);C(1090,869,5,1,B,B);F(1065,866,30,6);F(1103,862,2,16);F(1095,868,8,3);
  F(1012,855,2,10);F(1003,855,17,2);C(1050,855,3,1,B,B);
  R(1025.5,883,70,4,1.5);F(1027,882,21,5);F(1054,882,20,5);
  /* lower fat valve */
  F(1055,895,16,95);
  [[1053,893],[1053,909],[1053,919],[1053,932],[1053,975],[1053,984]].forEach(([x,y])=>F(x,y,21,3));
  F(1053,925,22,20);C(1061,943,11,1,B,B);F(1052,958,20,30);
  L(1081,893,1081,918,2);F(1072,918,8,2);F(1072,946,8,2);L(1080,944,1080,968,2);F(1050,968,28,3,B);R(1050.5,968,28,4);
  /* routing lines */
  const yellow='#ffff00',green='#008000';
  const dash=(a,b,c,d)=>{L(a,b,c,d,3.5,yellow);s.push(`<line x1="${a}" y1="${b}" x2="${c}" y2="${d}" stroke="${green}" stroke-width="3.5" stroke-dasharray="12 6"/>`);};
  L(447,310,447,452,3,yellow);L(27,617,447,617,3,yellow);
  dash(447,452,1135,452);dash(447,452,447,807);
  L(1135,452,1135,587,3,yellow);L(1135,587,1430,587,3,yellow);L(1430,478,1430,587,3,yellow);
  dash(1135,207,1135,452);dash(1135,207,1255,207);dash(1255,207,1255,272);L(1255,207,1397,207,3,yellow);
  s.push(`<circle cx="449" cy="677" r="4" fill="none" stroke="${yellow}" stroke-width="3"/>`);F(444,676,11,5,yellow);
  /* motors */
  scribble(431,252,'#000');redbar(412,271,39,5);
  L(436,277,447,310,1,green);L(440,290,444,305,1,green);blob(455,299);
  scribble(1247,305,'#800000');F(1222,322,48,7,'#800000');redbar(1224,323,44,5);
  L(1254,272,1254,302,3,green);P('M1251 279L1254 272L1257 279',1,green);blob(1244,275,'#000',0);
  scribble(1430,457,'#ff0000');redbar(1407,475,46,6);
  L(1424,483,1427,498,1,green);blob(1438,492);
  return s.join('');
}
def('sc-canvas',`<style>:host{display:block;flex:1;position:relative;background:#fff;border-left:1px solid #666;overflow:hidden;min-width:0}
svg{display:block;position:absolute;left:0;top:0;width:1865px;height:829px}</style>
<svg viewBox="27 164 1865 829" shape-rendering="crispEdges">${drawing()}</svg><slot></slot>`);
def('sc-popup',`<style>
:host{position:absolute;left:9px;top:0;width:134px;height:161px;background:#fff;box-shadow:1px 2px 6px rgba(0,0,0,.45);border:1px solid #bbb;box-sizing:border-box;display:flex;flex-direction:column;font:12px ${FONT};color:#000}
.h{height:31px;flex:none;color:#a0a0a0;font-size:12px;letter-spacing:-.1px;display:flex;align-items:center;justify-content:space-between;padding:0 10px 2px 8px;background:#fff;border-bottom:2px solid #f0f0f0;box-sizing:border-box}
.l{flex:1;border:1px solid #999;border-width:1px 1px 2px 1px;margin:1px 0 0 1px;padding:1px 5px}
.i{display:block;width:fit-content;padding:1px 3px;line-height:15px;background:#efefef;color:#000;font-size:12px;letter-spacing:-.4px}
.v{height:24px;flex:none;margin-top:2px;background:#505050;color:#fff;display:flex;align-items:center;justify-content:center;font-size:11.5px;letter-spacing:-.3px;border-bottom:1px solid #888}
.pad{height:1px;flex:none}
</style><div class="h"><span>Cheminement</span><svg width="11" height="13" viewBox="0 0 11 13"><path d="M1 1L10 12M10 1L1 12" stroke="#e6e6e6" fill="none"/></svg></div>
<div class="l"><span class="i">CH2</span></div><div class="v">Valider</div><div class="pad"></div>`);
def('sc-tip',`<style>:host{position:absolute;left:779px;top:424px;width:375px;height:24px;background:#f7f5de;color:#808080;border-radius:3px;${TXT};display:flex;align-items:center;padding-left:6px;box-sizing:border-box;white-space:nowrap}</style><slot></slot>`);
def('sc-messages',`<style>:host{display:block;height:23px;flex:none;padding:3px 0 0 27px;box-sizing:border-box}
div{width:76px;height:20px;box-sizing:border-box;background:linear-gradient(#3a3a3a,#454545);border:1px solid #6a6a6a;border-bottom:0;color:#5f5f5f;font:11.5px ${FONT};padding:2px 0 0 5px}</style><div><slot></slot></div>`);
def('sc-status',el=>`<style>:host{display:flex;flex:1;align-items:center;padding:0 10px 0 5px;box-sizing:border-box;color:#e4e4e4;${TXT};white-space:nowrap}
.t{flex:1;margin-left:6px}svg{flex:none}.c{letter-spacing:-.3px}</style><svg width="13" height="13" viewBox="0 0 13 13"><path d="M0 1H13V10H6L4 13V10H0Z" fill="#7bb03a"/><path d="M4 3V4M9 3V4M4 6H9" stroke="#e8f5d0"/></svg><span class="t"><slot></slot></span><span class="c">${el.getAttribute('coords')}</span>`);
</script>
</body></html>
